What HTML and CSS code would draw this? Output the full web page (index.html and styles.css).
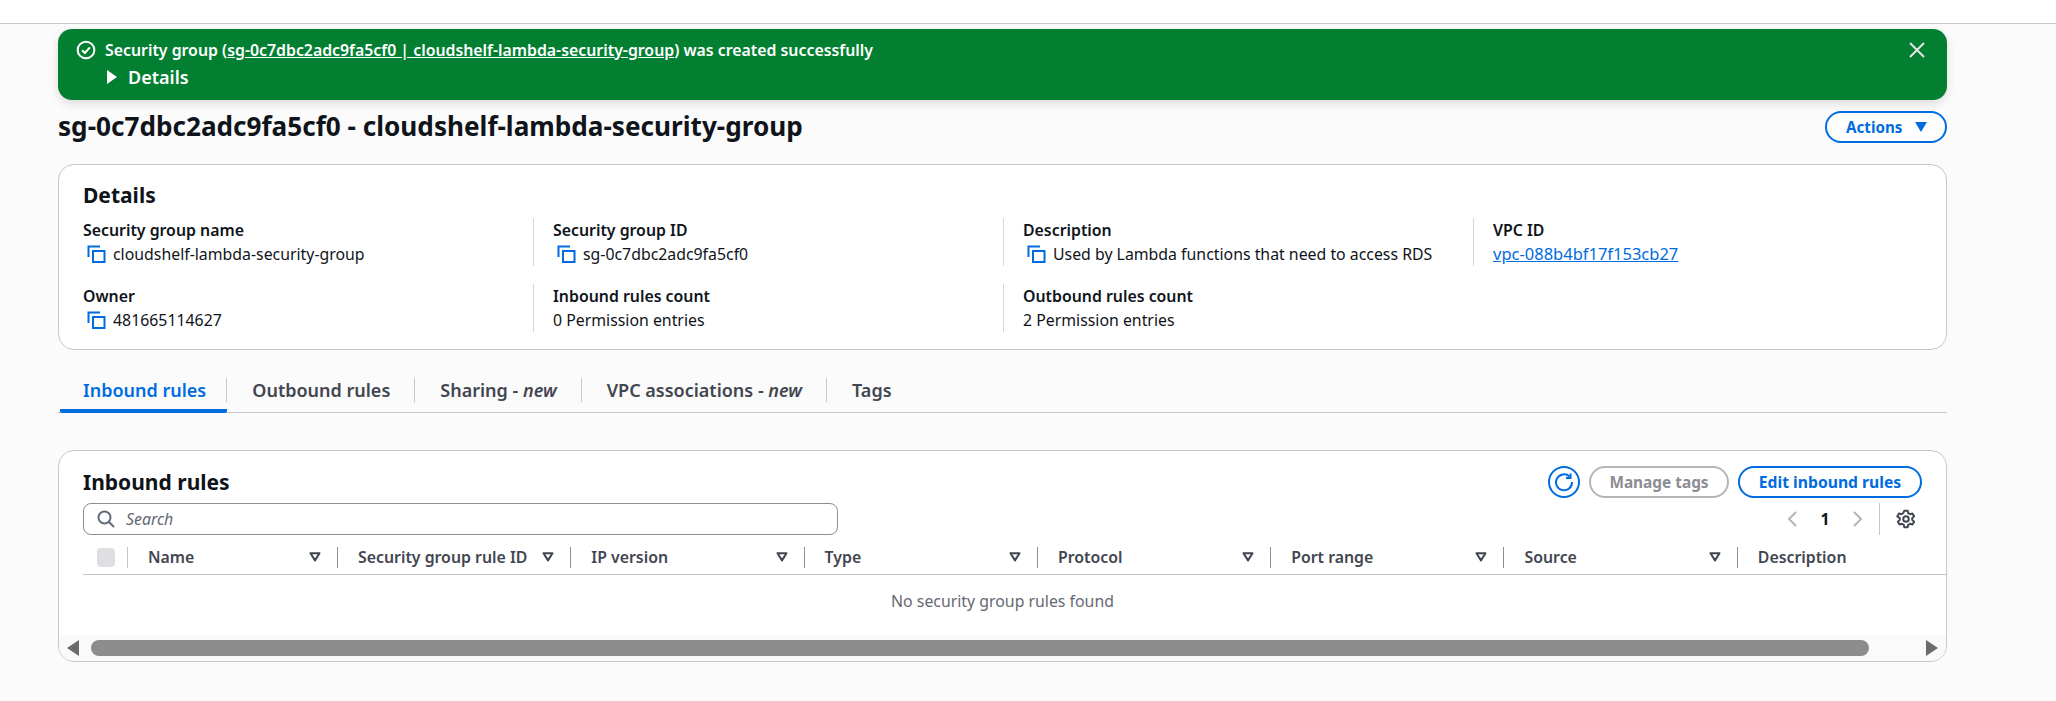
FILE: index.html
```html
<!DOCTYPE html>
<html lang="en">
<head>
    <meta charset="UTF-8">
    <link rel="stylesheet" href="styles.css">
    <title>Security group</title>
</head>
<body>
    <div class="topbar"></div>

    <main class="page">
        <!-- flash message -->
        <div class="flash">
            <div class="flash-line">
                <svg class="flash-icon" width="20" height="20" viewBox="0 0 18 18"><circle cx="9" cy="9" r="7.5" fill="none" stroke="#fff" stroke-width="1.8"/><path d="M5.5 9.2l2.5 2.5 4.5-5" fill="none" stroke="#fff" stroke-width="1.8"/></svg>
                <span>Security group (<a href="#">sg-0c7dbc2adc9fa5cf0 | cloudshelf-lambda-security-group</a>) was created successfully</span>
                <svg class="flash-close" width="16" height="16" viewBox="0 0 16 16"><path d="M1 1l14 14M15 1L1 15" fill="none" stroke="#e6e6e6" stroke-width="2"/></svg>
            </div>
            <div class="flash-details"><span class="caret-right"></span>Details</div>
        </div>

        <div class="title-row">
            <h1>sg-0c7dbc2adc9fa5cf0 - cloudshelf-lambda-security-group</h1>
            <button class="btn actions">Actions <span class="caret-down"></span></button>
        </div>

        <!-- details card -->
        <section class="card details">
            <h2>Details</h2>
            <div class="kv-grid">
                <div class="kv">
                    <div class="kv-label">Security group name</div>
                    <div class="kv-value"><svg class="copy" width="19" height="18" viewBox="0 0 19 18"><path d="M1.5 12V1.5H13" fill="none" stroke="#006ce0" stroke-width="2"/><rect x="6" y="6" width="11.5" height="11" fill="none" stroke="#006ce0" stroke-width="2"/></svg>cloudshelf-lambda-security-group</div>
                </div>
                <div class="kv">
                    <div class="kv-label">Security group ID</div>
                    <div class="kv-value"><svg class="copy" width="19" height="18" viewBox="0 0 19 18"><path d="M1.5 12V1.5H13" fill="none" stroke="#006ce0" stroke-width="2"/><rect x="6" y="6" width="11.5" height="11" fill="none" stroke="#006ce0" stroke-width="2"/></svg>sg-0c7dbc2adc9fa5cf0</div>
                </div>
                <div class="kv">
                    <div class="kv-label">Description</div>
                    <div class="kv-value"><svg class="copy" width="19" height="18" viewBox="0 0 19 18"><path d="M1.5 12V1.5H13" fill="none" stroke="#006ce0" stroke-width="2"/><rect x="6" y="6" width="11.5" height="11" fill="none" stroke="#006ce0" stroke-width="2"/></svg>Used by Lambda functions that need to access RDS</div>
                </div>
                <div class="kv">
                    <div class="kv-label">VPC ID</div>
                    <div class="kv-value"><a class="vpc-link" href="#">vpc-088b4bf17f153cb27</a></div>
                </div>
                <div class="kv">
                    <div class="kv-label">Owner</div>
                    <div class="kv-value"><svg class="copy" width="19" height="18" viewBox="0 0 19 18"><path d="M1.5 12V1.5H13" fill="none" stroke="#006ce0" stroke-width="2"/><rect x="6" y="6" width="11.5" height="11" fill="none" stroke="#006ce0" stroke-width="2"/></svg>481665114627</div>
                </div>
                <div class="kv">
                    <div class="kv-label">Inbound rules count</div>
                    <div class="kv-value">0 Permission entries</div>
                </div>
                <div class="kv">
                    <div class="kv-label">Outbound rules count</div>
                    <div class="kv-value">2 Permission entries</div>
                </div>
            </div>
        </section>

        <!-- tabs -->
        <nav class="tabs">
            <a class="tab active" href="#"><span>Inbound rules</span></a>
            <a class="tab" href="#"><span>Outbound rules</span></a>
            <a class="tab" href="#"><span>Sharing - <em>new</em></span></a>
            <a class="tab" href="#"><span>VPC associations - <em>new</em></span></a>
            <a class="tab last" href="#"><span>Tags</span></a>
        </nav>

        <!-- rules table -->
        <section class="card rules">
            <div class="rules-head">
                <h2>Inbound rules</h2>
                <div class="rules-actions">
                    <button class="refresh"><svg width="20" height="20" viewBox="0 0 20 20"><path d="M15.5 4.5A8 8 0 1 0 18 10" fill="none" stroke="#006ce0" stroke-width="2"/><path d="M16.5 1.5v4.5H12" fill="none" stroke="#006ce0" stroke-width="2"/></svg></button>
                    <button class="btn disabled">Manage tags</button>
                    <button class="btn edit">Edit inbound rules</button>
                </div>
            </div>
            <div class="filter-row">
                <div class="search">
                    <svg width="18" height="18" viewBox="0 0 18 18"><circle cx="7.5" cy="7.5" r="6" fill="none" stroke="#5f6b7a" stroke-width="2"/><path d="M12 12l5 5" fill="none" stroke="#5f6b7a" stroke-width="2"/></svg>
                    <span>Search</span>
                </div>
                <div class="pager">
                    <svg width="10" height="16" viewBox="0 0 10 16"><path d="M9 1L2 8l7 7" fill="none" stroke="#b4b4bb" stroke-width="2"/></svg>
                    <span class="page-num">1</span>
                    <svg width="10" height="16" viewBox="0 0 10 16"><path d="M1 1l7 7-7 7" fill="none" stroke="#b4b4bb" stroke-width="2"/></svg>
                    <div class="pager-settings">
                        <svg width="20" height="20" viewBox="0 0 18 18"><circle cx="9" cy="9" r="2.5" fill="none" stroke="#424650" stroke-width="1.8"/><path d="M7.5 1.5h3l.5 2.3 1.6.9 2.2-.7 1.5 2.6-1.7 1.6v1.6l1.7 1.6-1.5 2.6-2.2-.7-1.6.9-.5 2.3h-3l-.5-2.3-1.6-.9-2.2.7-1.5-2.6 1.7-1.6V8.2L1.2 6.6l1.5-2.6 2.2.7 1.6-.9z" fill="none" stroke="#424650" stroke-width="1.8" stroke-linejoin="round"/></svg>
                    </div>
                </div>
            </div>

            <div class="thead">
                <div class="th th-check"><span class="checkbox"></span></div>
                <div class="th">Name <svg class="sort" width="12" height="10" viewBox="0 0 12 10"><path d="M1.5 1.2h9L6 8.4z" fill="none" stroke="#424650" stroke-width="2" stroke-linejoin="round"/></svg></div>
                <div class="th">Security group rule ID <svg class="sort" width="12" height="10" viewBox="0 0 12 10"><path d="M1.5 1.2h9L6 8.4z" fill="none" stroke="#424650" stroke-width="2" stroke-linejoin="round"/></svg></div>
                <div class="th">IP version <svg class="sort" width="12" height="10" viewBox="0 0 12 10"><path d="M1.5 1.2h9L6 8.4z" fill="none" stroke="#424650" stroke-width="2" stroke-linejoin="round"/></svg></div>
                <div class="th">Type <svg class="sort" width="12" height="10" viewBox="0 0 12 10"><path d="M1.5 1.2h9L6 8.4z" fill="none" stroke="#424650" stroke-width="2" stroke-linejoin="round"/></svg></div>
                <div class="th">Protocol <svg class="sort" width="12" height="10" viewBox="0 0 12 10"><path d="M1.5 1.2h9L6 8.4z" fill="none" stroke="#424650" stroke-width="2" stroke-linejoin="round"/></svg></div>
                <div class="th">Port range <svg class="sort" width="12" height="10" viewBox="0 0 12 10"><path d="M1.5 1.2h9L6 8.4z" fill="none" stroke="#424650" stroke-width="2" stroke-linejoin="round"/></svg></div>
                <div class="th">Source <svg class="sort" width="12" height="10" viewBox="0 0 12 10"><path d="M1.5 1.2h9L6 8.4z" fill="none" stroke="#424650" stroke-width="2" stroke-linejoin="round"/></svg></div>
                <div class="th th-last">Description</div>
            </div>
            <div class="empty">No security group rules found</div>

            <div class="hscroll">
                <span class="arrow-left"></span>
                <div class="thumb"></div>
                <span class="arrow-right"></span>
            </div>
        </section>
    </main>
</body>
</html>
```

FILE: styles.css
```css
* {
    box-sizing: border-box;
}
body {
    margin: 0;
    background-color: #fbfbfb;
    color: #0f141a;
    font-family: "Noto Sans", sans-serif;
    font-size: 15.85px;
    line-height: 20px;
}
a {
    color: #006ce0;
}
button {
    font-family: inherit;
}
.topbar {
    height: 24px;
    background-color: #fff;
    border-bottom: 1px solid #c6c6cd;
}
.page {
    width: 1889px;
    margin-left: 58px;
    padding-top: 5px;
}

/* flash */
.flash {
    height: 71px;
    padding: 11px 22px 0 19px;
    background-color: #037f31;
    border-radius: 14px;
    color: #fff;
    box-shadow: 0 4px 10px rgba(0, 7, 22, 0.12);
    font-weight: 600;
}
.flash-line {
    display: flex;
    align-items: center;
}
.flash-icon {
    margin: 0 9px 0 -1px;
}
.flash-line a {
    color: #fff;
}
.flash-close {
    margin-left: auto;
}
.flash-details {
    display: flex;
    align-items: center;
    margin: 7px 0 0 30px;
    font-size: 18px;
}
.caret-right {
    width: 0;
    height: 0;
    margin-right: 11px;
    border-left: 10px solid #fff;
    border-top: 7px solid transparent;
    border-bottom: 7px solid transparent;
}

/* title */
.title-row {
    display: flex;
    align-items: center;
    justify-content: space-between;
    height: 41px;
    margin-top: 7px;
    margin-bottom: 16px;
}
h1 {
    margin: 0 0 3px;
    font-size: 26.15px;
    line-height: 30px;
    font-weight: 700;
}
.btn {
    height: 32px;
    padding: 0 18px;
    background-color: #fff;
    border: 2px solid #006ce0;
    border-radius: 20px;
    color: #006ce0;
    font-size: 15.7px;
    font-weight: 700;
}
.actions {
    display: flex;
    align-items: center;
    width: 122px;
    margin-bottom: 1px;
    padding-left: 19px;
    font-size: 15.2px;
}
.caret-down {
    width: 0;
    height: 0;
    margin-left: 13px;
    border-top: 10px solid #006ce0;
    border-left: 6px solid transparent;
    border-right: 6px solid transparent;
}

/* cards */
.card {
    background-color: #fff;
    border: 1px solid #c6c6cd;
    border-radius: 16px;
}
h2 {
    margin: 0;
    font-size: 21px;
    line-height: 26px;
    font-weight: 700;
}
.details {
    height: 186px;
    padding: 17px 24px 0;
}
.kv-grid {
    display: grid;
    grid-template-columns: repeat(4, 470px);
    grid-auto-rows: 48px;
    row-gap: 18px;
    margin: 10px -20px 0;
}
.kv {
    padding-left: 19px;
    border-left: 1px solid #d5d5da;
}
.kv:nth-child(1),
.kv:nth-child(5) {
    border-left-color: transparent;
}
.kv-label {
    font-weight: 600;
    line-height: 24px;
}
.kv-value {
    display: flex;
    align-items: center;
    height: 23px;
    color: #0f141a;
}
.vpc-link {
    font-size: 16.5px;
}
.copy {
    margin: 0 7px 0 4px;
}

/* tabs */
.tabs {
    display: flex;
    height: 49px;
    margin-top: 14px;
    border-bottom: 1px solid #c6c6cd;
}
.tab {
    display: flex;
    align-items: flex-start;
    padding: 14px 0 0 25px;
    color: #424650;
    font-size: 18px;
    font-weight: 600;
    text-decoration: none;
}
.tab span {
    display: block;
    height: 24px;
    padding-right: 24px;
    line-height: 24px;
    border-right: 1px solid #c6c6cd;
}
.tab.last span {
    border-right: 0;
}
.tab.active {
    height: 49px;
    margin-left: 2px;
    padding-left: 23px;
    color: #006ce0;
    border-bottom: 4px solid #006ce0;
    border-radius: 2px;
}
.tab.active span {
    padding-right: 20px;
}

/* rules */
.rules {
    height: 212px;
    margin-top: 37px;
    padding: 0 24px;
    overflow: hidden;
}
.rules-head {
    display: flex;
    justify-content: space-between;
    height: 52px;
    padding-top: 15px;
}
.rules-head h2 {
    padding-top: 3px;
}
.rules-actions {
    display: flex;
    gap: 9px;
}
.refresh {
    display: flex;
    align-items: center;
    justify-content: center;
    width: 32px;
    height: 32px;
    padding: 0;
    background-color: #fff;
    border: 2px solid #006ce0;
    border-radius: 50%;
}
.btn.disabled {
    width: 140px;
    padding: 0;
    border-color: #b4b4bb;
    color: #8c8c94;
    font-size: 15.4px;
}
.btn.edit {
    width: 184px;
    padding: 0;
}
.filter-row {
    display: flex;
    justify-content: space-between;
    height: 32px;
}
.search {
    display: flex;
    align-items: center;
    width: 755px;
    padding-left: 13px;
    border: 1px solid #8c8c94;
    border-radius: 8px;
    color: #656871;
    font-style: italic;
}
.search span {
    margin-left: 11px;
}
.pager {
    display: flex;
    align-items: center;
}
.page-num {
    width: 56px;
    text-align: center;
    font-weight: 700;
}
.pager-settings {
    display: flex;
    align-items: center;
    height: 32px;
    margin-left: 16px;
    padding: 0 6px 0 16px;
    border-left: 1px solid #c6c6cd;
}

/* table head */
.thead {
    display: grid;
    grid-template-columns: 45px 210px repeat(6, 233.3px) 1fr;
    align-items: center;
    height: 40px;
    margin-right: -24px;
    padding-top: 5px;
    border-bottom: 1px solid #c6c6cd;
    color: #424650;
    font-weight: 600;
}
.th {
    display: flex;
    align-items: center;
    justify-content: space-between;
    height: 21px;
    padding: 0 16px 0 20px;
    border-right: 1px solid #8c8c94;
}
.th-check {
    padding: 0 0 0 14px;
    border-right-color: #c6c6cd;
}
.th-last {
    border-right: 0;
}
.checkbox {
    width: 18px;
    height: 19px;
    background-color: #dedee3;
    border-radius: 4px;
}
.empty {
    height: 60px;
    padding-top: 16px;
    color: #656871;
    text-align: center;
}
.hscroll {
    display: flex;
    align-items: center;
    height: 26px;
    margin: 0 -24px;
    padding: 0 7px 0 8px;
    background-color: #fafafa;
}
.thumb {
    width: 1778px;
    height: 16px;
    margin: 0 57px 0 12px;
    background-color: #8c8c8c;
    border-radius: 8px;
}
.arrow-left,
.arrow-right {
    width: 0;
    height: 0;
    border-top: 8px solid transparent;
    border-bottom: 8px solid transparent;
}
.arrow-left {
    border-right: 12px solid #6b6b6b;
}
.arrow-right {
    border-left: 12px solid #6b6b6b;
}
```
